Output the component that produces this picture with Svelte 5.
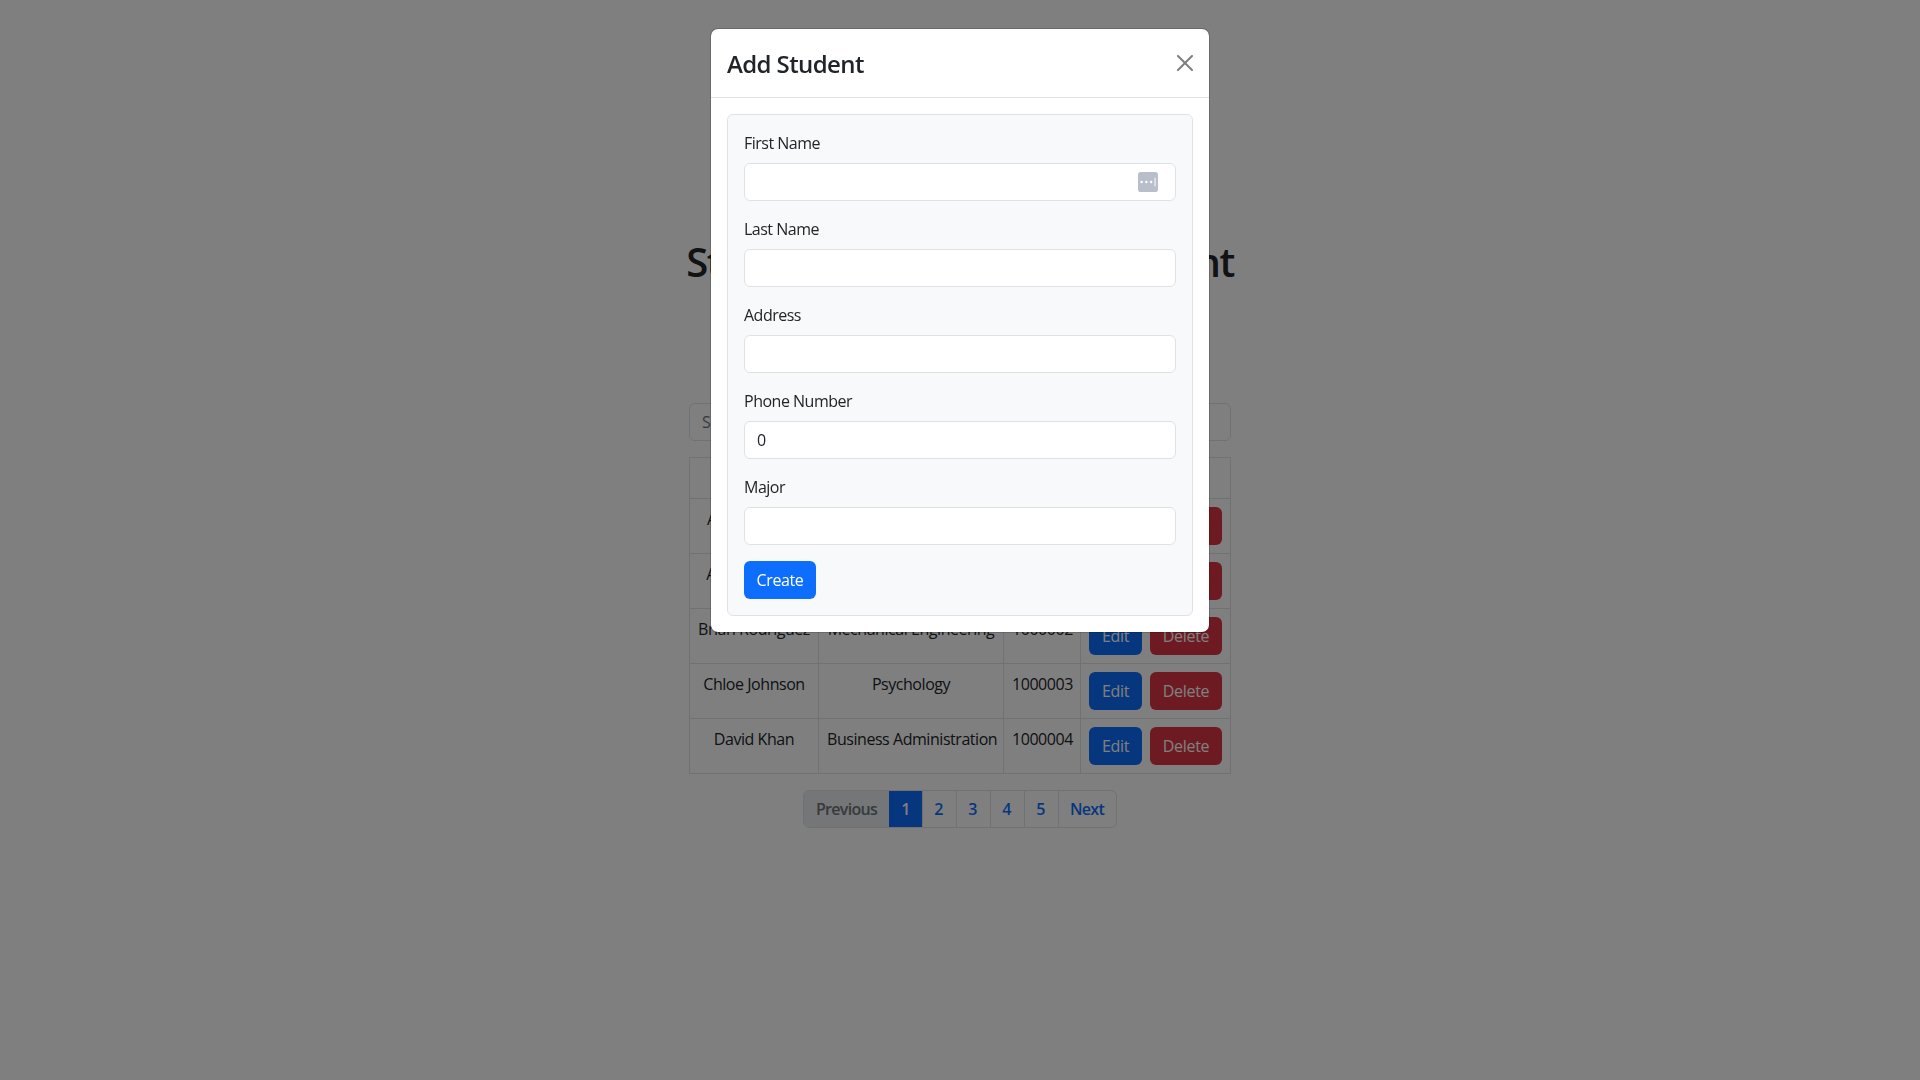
<script>
  const fields = [
    { label: 'First Name', value: '', icon: true },
    { label: 'Last Name', value: '' },
    { label: 'Address', value: '' },
    { label: 'Phone Number', value: '0' },
    { label: 'Major', value: '' }
  ];
  const rows = [
    { name: 'Alice Johnson', major: 'Computer Science', id: '1000000' },
    { name: 'Aaron Walker', major: 'Biology', id: '1000001' },
    { name: 'Brian Rodriguez', major: 'Mechanical Engineering', id: '1000002' },
    { name: 'Chloe Johnson', major: 'Psychology', id: '1000003' },
    { name: 'David Khan', major: 'Business Administration', id: '1000004' }
  ];
  const pages = ['1', '2', '3', '4', '5'];
</script>

<div class="page">
  <h1>Student Records Management</h1>
  <div class="panel">
    <input class="search" placeholder="Search..." />
    <table>
      <colgroup>
        <col class="c1" /><col class="c2" /><col class="c3" /><col class="c4" />
      </colgroup>
      <thead>
        <tr><th>Name</th><th>Major</th><th>ID</th><th>Actions</th></tr>
      </thead>
      <tbody>
        {#each rows as r}
          <tr>
            <td>{r.name}</td>
            <td>{r.major}</td>
            <td>{r.id}</td>
            <td>
              <div class="acts">
                <button class="btn edit">Edit</button>
                <button class="btn del">Delete</button>
              </div>
            </td>
          </tr>
        {/each}
      </tbody>
    </table>
    <nav class="pager">
      <span class="pg prev">Previous</span>
      {#each pages as p, i}
        <span class="pg num" class:on={i === 0}>{p}</span>
      {/each}
      <span class="pg next">Next</span>
    </nav>
  </div>
</div>

<div class="backdrop"></div>

<div class="modal">
  <header>
    <h5>Add Student</h5>
    <svg class="close" viewBox="0 0 16 16" aria-label="Close">
      <path d="M.293.293a1 1 0 0 1 1.414 0L8 6.586 14.293.293a1 1 0 1 1 1.414 1.414L9.414 8l6.293 6.293a1 1 0 0 1-1.414 1.414L8 9.414l-6.293 6.293a1 1 0 0 1-1.414-1.414L6.586 8 .293 1.707a1 1 0 0 1 0-1.414z" />
    </svg>
  </header>
  <div class="body">
    <form>
      {#each fields as f}
        <div class="field">
          <label>{f.label}</label>
          <div class="inp">
            {f.value}
            {#if f.icon}
              <svg class="pw" viewBox="0 0 21 21">
                <rect width="21" height="21" rx="3" fill="#b9bfca" />
                <circle cx="3.8" cy="10.5" r="1.3" fill="#fff" />
                <circle cx="8.8" cy="10.5" r="1.3" fill="#fff" />
                <circle cx="13.8" cy="10.5" r="1.3" fill="#fff" />
                <rect x="17.4" y="6" width="1" height="9" fill="#fff" />
              </svg>
            {/if}
          </div>
        </div>
      {/each}
      <button type="button" class="create">Create</button>
    </form>
  </div>
</div>

<style>
  :global(body) {
    margin: 0;
    background: #fff;
    font-family: "Open Sans", "Noto Sans", sans-serif;
    font-size: 16px;
    color: #212529;
  }
  .page {
    display: flex;
    flex-direction: column;
    align-items: center;
    min-height: 1080px;
    box-sizing: border-box;
    padding-top: 238px;
  }
  h1 {
    margin: 0 0 117px;
    font-size: 40px;
    line-height: 48px;
    font-weight: 600;
    white-space: nowrap;
    letter-spacing: -1.4px;
  }
  .panel { width: 542px; display: flex; flex-direction: column; align-items: center; }
  .search {
    box-sizing: border-box;
    width: 100%;
    height: 38px;
    padding: 6px 12px;
    border: 1px solid #dee2e6;
    border-radius: 6px;
    font: inherit;
    letter-spacing: -0.5px;
    margin-bottom: 16px;
  }
  .search::placeholder { color: #6c757d; }
  table {
    width: 541px;
    align-self: flex-start;
    table-layout: fixed;
    border-collapse: collapse;
    margin-bottom: 16px;
    text-align: center;
    letter-spacing: -0.45px;
    white-space: nowrap;
  }
  .c1 { width: 129px; }
  .c2 { width: 185px; }
  .c3 { width: 77px; }
  .c4 { width: 150px; }
  th, td { border: 1px solid #dee2e6; padding: 8px; vertical-align: top; line-height: 24px; }
  th { font-weight: 700; }
  .acts { display: flex; gap: 8px; }
  .btn {
    height: 38px;
    padding: 0;
    border: none;
    border-radius: 6px;
    color: #fff;
    font: inherit;
    letter-spacing: -0.3px;
  }
  .edit { background: #0d6efd; width: 53px; }
  .del { background: #dc3545; width: 72px; }
  .pager {
    display: flex;
    height: 38px;
    border: 1px solid #dee2e6;
    border-radius: 6px;
    box-sizing: border-box;
    overflow: hidden;
    font-weight: 600;
    letter-spacing: -0.7px;
  }
  .pg {
    display: flex;
    align-items: center;
    justify-content: center;
    box-sizing: border-box;
    color: #0d6efd;
    border-left: 1px solid #dee2e6;
  }
  .prev { width: 85px; border-left: none; background: #e9ecef; color: #6c757d; }
  .num { width: 34px; padding-right: 2px; }
  .on { width: 33px; padding-right: 0; border-left: none; background: #0d6efd; color: #fff; }
  .next { width: 58px; padding-right: 1px; }

  .backdrop {
    position: fixed;
    inset: 0;
    background: rgba(0, 0, 0, 0.5);
  }
  .modal {
    position: fixed;
    top: 28px;
    left: 710px;
    width: 500px;
    box-sizing: border-box;
    background: #fff;
    background-clip: padding-box;
    border: 1px solid rgba(0, 0, 0, 0.175);
    border-radius: 8px;
    overflow: hidden;
  }
  header {
    display: flex;
    align-items: center;
    justify-content: space-between;
    padding: 0 16px;
    height: 68px;
    border-bottom: 1px solid #dee2e6;
  }
  h5 {
    margin: 3px 0 0;
    font-size: 24px;
    font-weight: 600;
    line-height: 1.2;
    letter-spacing: -0.6px;
  }
  .close {
    width: 16px;
    height: 16px;
    fill: #000;
    opacity: 0.5;
  }
  .body { padding: 16px; }
  form {
    display: flex;
    flex-direction: column;
    padding: 16px;
    background: #f8f9fa;
    border: 1px solid #dee2e6;
    border-radius: 6px;
  }
  .field { margin-bottom: 16px; }
  label {
    display: block;
    margin-bottom: 8px;
    line-height: 24px;
    font-size: 16px;
    letter-spacing: -0.5px;
  }
  .inp {
    box-sizing: border-box;
    display: flex;
    align-items: center;
    justify-content: space-between;
    height: 38px;
    padding: 6px 12px;
    background: #fff;
    border: 1px solid #dee2e6;
    border-radius: 6px;
  }
  .pw { width: 20px; height: 20px; margin-left: auto; margin-right: 5px; }
  .create {
    align-self: flex-start;
    width: 72px;
    height: 38px;
    padding: 0;
    border: none;
    border-radius: 6px;
    background: #0d6efd;
    color: #fff;
    font: inherit;
    letter-spacing: -0.4px;
  }
</style>
